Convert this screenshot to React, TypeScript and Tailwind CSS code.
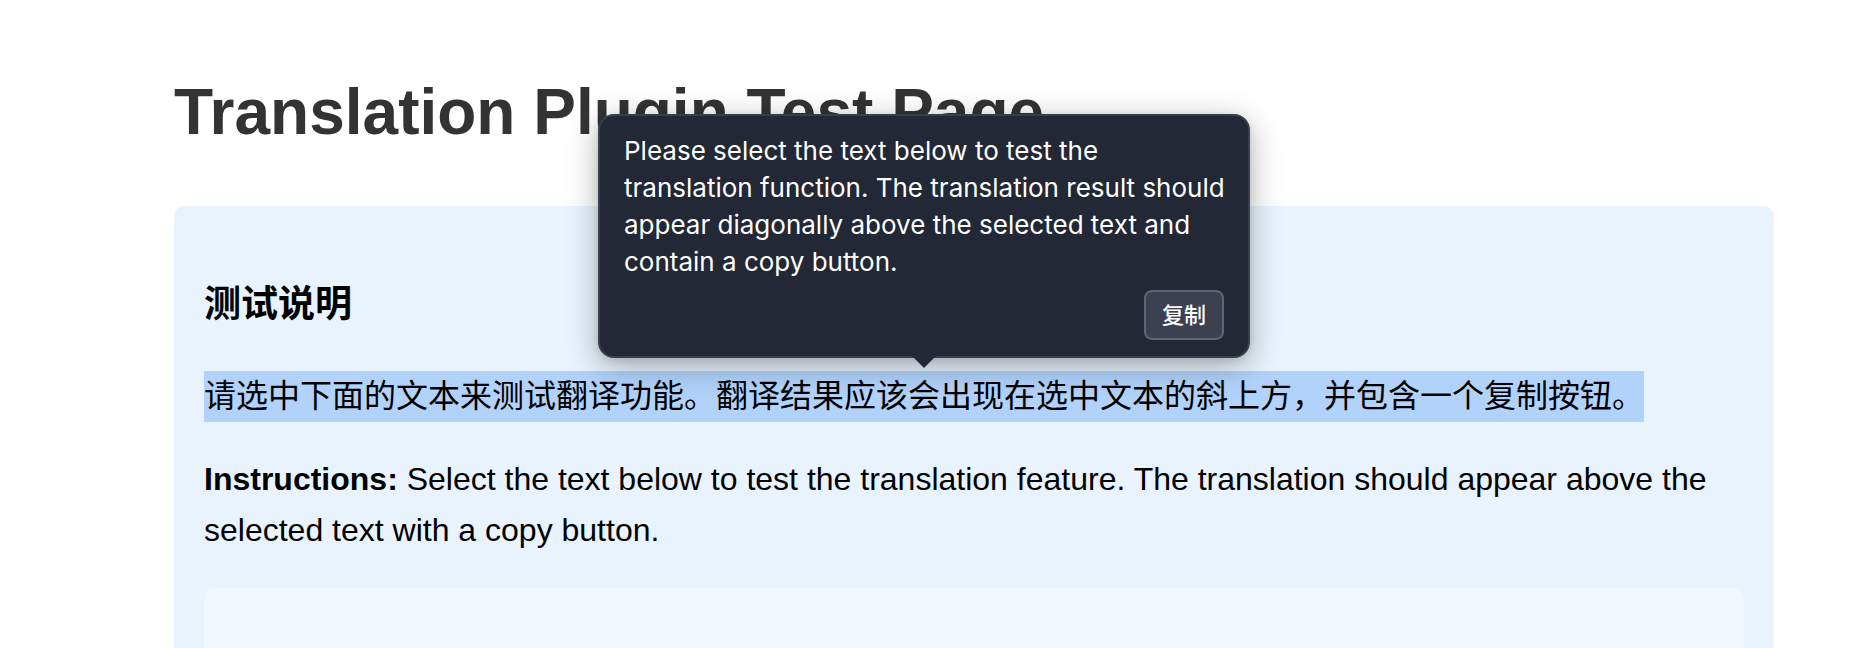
import { useState } from "react";

const translation =
  "Please select the text below to test the translation function. The translation result should appear diagonally above the selected text and contain a copy button.";

function TranslationPopup({ text }: { text: string }) {
  const [copied, setCopied] = useState(false);

  const copy = () => {
    navigator.clipboard?.writeText(text).then(() => setCopied(true));
  };

  return (
    <div
      role="tooltip"
      className="absolute bottom-full left-1/2 mb-[13px] flex w-[652px] -translate-x-1/2 flex-col items-end gap-2.5 rounded-2xl border-2 border-[#383f4c] bg-[#222835] py-4 pr-4 pl-6 text-white shadow-[0_8px_32px_rgba(0,0,0,0.3),0_2px_8px_rgba(0,0,0,0.1)]"
    >
      <p className="w-full font-['Inter','Noto_Sans_CJK_SC',sans-serif] text-[26px] leading-[37px]">
        {text}
      </p>
      <button
        type="button"
        lang="zh-CN"
        onClick={copy}
        className="mr-2 h-[50px] min-w-20 rounded-lg border-2 border-[#5f6572] bg-[#3b4150] px-4 font-['Inter','Noto_Sans_CJK_SC',sans-serif] text-[22px] leading-8 font-medium"
      >
        {copied ? "已复制" : "复制"}
      </button>
      <svg
        aria-hidden="true"
        viewBox="0 0 24 12"
        className="absolute top-full left-1/2 h-3 w-6 -translate-x-1/2 fill-[#222835]"
      >
        <path d="M0 0H24L12 12Z" />
      </svg>
    </div>
  );
}

export default function App() {
  return (
    <main className="flex min-h-screen flex-col bg-white pt-[61px] pr-[94px] pl-[174px] font-['Liberation_Sans','Noto_Sans_CJK_SC',sans-serif] text-[32px] leading-[51px] text-black">
      <h1 className="mb-[43px] text-[64px] leading-[102px] font-bold text-[#333333]">
        Translation Plugin Test Page
      </h1>
      <section className="flex flex-1 flex-col rounded-t-[10px] bg-[#e8f3fd] px-[30px] pt-[69px]">
        <h3 lang="zh-CN" className="text-[37px] leading-[60px] font-bold">
          测试说明
        </h3>
        <div className="relative mt-9 w-fit">
          <p lang="zh-CN" className="bg-[#b1d2fb]">
            请选中下面的文本来测试翻译功能。翻译结果应该会出现在选中文本的斜上方，并包含一个复制按钮。
          </p>
          <TranslationPopup text={translation} />
        </div>
        <p className="mt-8">
          <strong className="font-bold">Instructions:</strong> Select the text below to test the
          translation feature. The translation should appear above the selected text with a copy
          button.
        </p>
        <div className="mt-8 flex-1 rounded-t-[10px] bg-[#f0f8ff]" />
      </section>
    </main>
  );
}
